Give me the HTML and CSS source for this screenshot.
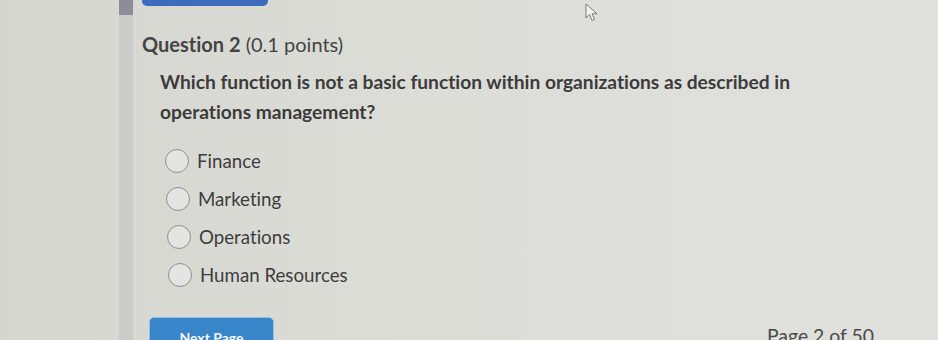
FILE: index.html
```html
<!DOCTYPE html>
<html lang="en">
<head>
  <meta charset="UTF-8" />
  <title>Question 2</title>
  <link rel="stylesheet" href="styles.css">
</head>
<body>
  <div class="page">
    <div class="rail"></div>
    <div class="track"><div class="thumb"></div></div>

    <main class="quiz">
      <div class="top-button"></div>

      <h2 class="question-title"><strong>Question 2</strong> (0.1 points)</h2>

      <p class="question-text">Which function is not a basic function within organizations as described in operations management?</p>

      <ul class="answers">
        <li class="answer a1"><span class="radio"></span>Finance</li>
        <li class="answer a2"><span class="radio"></span>Marketing</li>
        <li class="answer a3"><span class="radio"></span>Operations</li>
        <li class="answer a4"><span class="radio"></span>Human Resources</li>
      </ul>

      <div class="footer">
        <button class="next-button">Next Page</button>
        <span class="page-count">Page 2 of 50</span>
      </div>
    </main>
  </div>

  <!-- mouse pointer sitting over the page -->
  <svg class="cursor" width="14" height="20" viewBox="0 0 14 20">
    <path d="M1 1 L1 15 L4.5 11.5 L7 17.5 L9.5 16.5 L7 10.8 L12 10.8 Z" fill="#f2f2f0" stroke="#7a7a7a" stroke-width="1" stroke-linejoin="round"/>
  </svg>
</body>
</html>
```

FILE: styles.css
```css
html, body {
  margin: 0;
  padding: 0;
  height: 100%;
  overflow: hidden;
  background: #dcdcd7;
  font-family: Lato, "Open Sans", sans-serif;
  font-variant-ligatures: none;
  color: #3f3f3f;
}
.page {
  display: flex;
  height: 340px;
  background: linear-gradient(90deg, #d6d6d0 0%, #dcdcd7 40%, #e0e0dd 100%);
}
.rail {
  width: 119px;
  flex-shrink: 0;
}
.track {
  width: 14px;
  flex-shrink: 0;
  background: #cbcbca;
}
.thumb {
  height: 15px;
  background: #8b8e97;
}
.quiz {
  flex: 1;
  position: relative;
  padding-left: 9px;
}
.top-button {
  width: 126px;
  height: 6px;
  background: #3d6cbd;
  border-radius: 0 0 5px 5px;
}
.question-title {
  margin: 26px 0 0 0;
  font-size: 20px;
  font-weight: normal;
  line-height: 24px;
  color: #444;
}
.question-title strong {
  font-weight: bold;
}
.question-text {
  margin: 11px 0 0 18px;
  width: 700px;
  font-size: 19.2px;
  font-weight: bold;
  line-height: 30px;
  color: #3c3c3c;
}
.answers {
  list-style: none;
  margin: 15px 0 0 23px;
  padding: 0;
}
.answer {
  display: flex;
  align-items: center;
  gap: 8px;
  height: 38px;
  font-size: 18.7px;
  color: #3d3d3d;
}
.a2 { margin-left: 1px; }
.a3 { margin-left: 2px; }
.a4 { margin-left: 3px; }
.radio {
  width: 22px;
  height: 22px;
  border: 1px solid #8e8e8e;
  border-radius: 50%;
  background: #e4e4e2;
}
.footer {
  display: flex;
  justify-content: space-between;
  align-items: flex-start;
  margin-top: 23px;
  padding-left: 7px;
  width: 725px;
}
.next-button {
  width: 125px;
  height: 36px;
  border: 1px solid #8fc0ea;
  border-radius: 5px;
  background: #3886c9;
  color: #f4f8fc;
  font-family: Lato, sans-serif;
  font-size: 14px;
  font-weight: bold;
  padding: 6px 0 0 0;
  text-align: center;
  line-height: 20px;
}
.page-count {
  font-size: 19.4px;
  color: #4a4a4a;
  margin-top: 7px;
}
.cursor {
  position: absolute;
  left: 585px;
  top: 3px;
}
```
